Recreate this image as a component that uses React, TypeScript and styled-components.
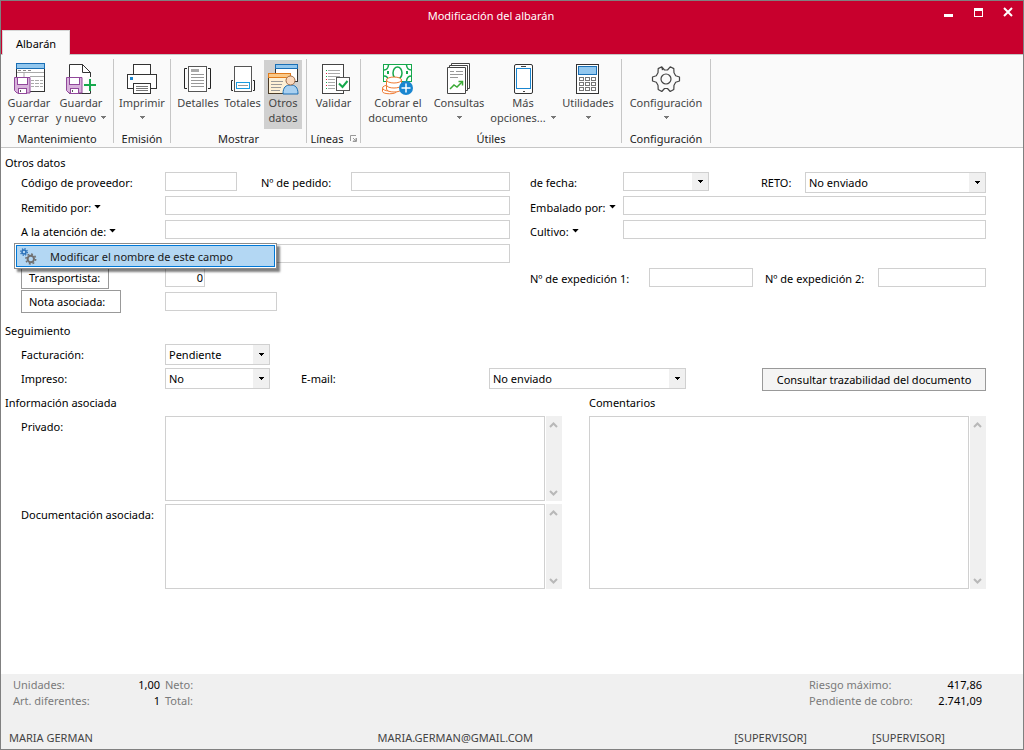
import React from 'react';
import styled, { createGlobalStyle } from 'styled-components';

const GlobalStyle = createGlobalStyle`
  *, *::before, *::after { box-sizing: border-box; }
  body { margin: 0; background: #fff; }
  body, button, input, select, textarea {
    font-family: 'Noto Sans', 'Open Sans', sans-serif;
    font-size: 11px;
    color: #000;
  }
`;

const Window = styled.div`
  display: flex;
  flex-direction: column;
  min-height: 100vh;
  border: 1px solid #808080;
  background: #fff;
`;

/* ---------- title bar ---------- */

const TitleBar = styled.header`
  display: flex;
  height: 29px;
  background: #c8002d;
`;

const Title = styled.h1`
  flex: 1;
  margin: 0;
  padding-left: 48px;
  font-size: 11px;
  font-weight: 400;
  line-height: 30px;
  text-align: center;
  color: #fff;
`;

const WindowButton = styled.button`
  display: flex;
  align-items: center;
  justify-content: center;
  width: 30px;
  height: 22px;
  padding: 0;
  border: 0;
  background: transparent;
`;

const TabStrip = styled.nav`
  display: flex;
  height: 25px;
  padding-left: 1px;
  background: #c8002d;
  border-bottom: 1px solid #c6c6c6;
`;

const Tab = styled.button`
  height: 25px;
  padding: 0 13px;
  border: 1px solid #d6d6d6;
  border-bottom: 0;
  background: #fafafa;
`;

/* ---------- ribbon ---------- */

const Ribbon = styled.div`
  display: flex;
  height: 93px;
  padding: 4px 0;
  background: #fafafa;
  border-bottom: 1px solid #c6c6c6;
`;

const Group = styled.section`
  display: flex;
  flex-direction: column;
  border-right: 1px solid #c6c6c6;
`;

const GroupTools = styled.div<{ $pad: string }>`
  display: flex;
  flex: none;
  height: 72px;
  padding: ${(p) => p.$pad};
`;

const GroupTitle = styled.div`
  display: flex;
  flex: none;
  align-items: center;
  justify-content: center;
  height: 12px;
  padding-top: 2px;
  color: #222;
`;

const Launcher = styled.button`
  display: flex;
  margin-left: 6px;
  padding: 0;
  border: 0;
  background: transparent;
`;

const Tool = styled.button<{ $width: number; $active?: boolean }>`
  display: flex;
  flex-direction: column;
  align-items: center;
  width: ${(p) => p.$width}px;
  height: 69px;
  margin-top: 1px;
  padding: 3px 0 0;
  border: 0;
  background: ${(p) => (p.$active ? '#d0d0d0' : 'transparent')};
  color: #444;
  line-height: 15px;
  white-space: nowrap;
`;

const ToolIcon = styled.svg`
  display: block;
  flex: none;
  width: 32px;
  height: 32px;
  overflow: visible;
`;

const ToolLine = styled.span`
  display: flex;
  align-items: center;
  justify-content: center;
  gap: 5px;
  height: 15px;
`;

/* ---------- form ---------- */

const Form = styled.form`
  flex: 1;
  padding: 2px 37px 20px 20px;
`;

const Heading = styled.h2<{ $first?: boolean }>`
  height: ${(p) => (p.$first ? 20 : 24)}px;
  margin: 0 0 0 -16px;
  padding-top: 2px;
  font-size: 11px;
  font-weight: 400;
  line-height: 22px;
`;

const Section = styled.section`
  margin-bottom: 4px;
`;

const Row = styled.div`
  display: grid;
  grid-template-columns: 144px minmax(0, 345fr) 113px minmax(0, 363fr);
  align-items: start;
  height: 24px;
`;

const TrackingRow = styled.div`
  display: flex;
  align-items: flex-start;
  height: 24px;
`;

const Cell = styled.div<{ $span?: number }>`
  position: relative;
  display: flex;
  align-items: flex-start;
  height: 24px;
  grid-column: span ${(p) => p.$span ?? 1};
`;

const Label = styled.label<{ $width?: number; $left?: number }>`
  flex: none;
  width: ${(p) => (p.$width ? `${p.$width}px` : 'auto')};
  padding: 2px 0 0 ${(p) => p.$left ?? 0}px;
  line-height: 22px;
  white-space: nowrap;
`;

const BlockLabel = styled(Label)`
  display: block;
  height: 24px;
`;

const MenuLabel = styled.button<{ $left?: number }>`
  display: flex;
  align-items: center;
  gap: 3px;
  height: 24px;
  padding: 2px 0 0 ${(p) => p.$left ?? 0}px;
  border: 0;
  background: transparent;
  white-space: nowrap;
`;

const Field = styled.input<{ $width?: number }>`
  flex: ${(p) => (p.$width ? 'none' : '1')};
  width: ${(p) => (p.$width ? `${p.$width}px` : 'auto')};
  min-width: 0;
  height: 19px;
  margin-top: 2px;
  padding: 0 1px 0 3px;
  border: 1px solid #d0d0d0;
  border-radius: 0;
  background: #fff;
`;

const NumberField = styled(Field)`
  text-align: right;
`;

const SelectBox = styled.div<{ $width?: number; $short?: boolean }>`
  position: relative;
  flex: ${(p) => (p.$width ? 'none' : '1')};
  width: ${(p) => (p.$width ? `${p.$width}px` : 'auto')};
  height: ${(p) => (p.$short ? 19 : 21)}px;
  margin-top: 2px;

  select {
    display: block;
    width: 100%;
    height: 100%;
    padding: 0 20px 0 3px;
    border: 1px solid #d0d0d0;
    border-radius: 0;
    background: #fff;
    appearance: none;
  }
`;

const SelectArrow = styled.span`
  position: absolute;
  top: 1px;
  right: 1px;
  bottom: 1px;
  display: flex;
  align-items: center;
  justify-content: center;
  width: 16px;
  background: #f0f0f0;
  pointer-events: none;
`;

const LinkButton = styled.button<{ $width: number }>`
  width: ${(p) => p.$width}px;
  height: 23px;
  padding: 0 0 0 7px;
  border: 1px solid #999;
  background: #fff;
  text-align: left;
  white-space: nowrap;
`;

const TraceButton = styled(LinkButton)`
  margin: 2px 0 0 auto;
  padding: 0;
  background: #f4f4f4;
  text-align: center;
`;

const Menu = styled.div`
  position: absolute;
  z-index: 2;
  top: 25px;
  left: -7px;
  width: 263px;
  padding: 1px;
  border: 1px solid #8c8c8c;
  background: #fff;
  box-shadow: 3px 3px 2px rgba(0, 0, 0, 0.5);
`;

const MenuItem = styled.button`
  display: flex;
  align-items: center;
  gap: 13px;
  width: 100%;
  height: 22px;
  padding: 0 3px;
  border: 1px solid #0078d7;
  background: #b3d7f3;
  color: #1a1a1a;
  white-space: nowrap;
`;

const Notes = styled.div`
  display: grid;
  grid-template-columns: minmax(0, 541fr) minmax(0, 397fr);
  column-gap: 27px;
`;

const NoteRow = styled.div`
  display: flex;
  height: 88px;
`;

const MemoBox = styled.div<{ $height: number }>`
  flex: 1;
  display: flex;
  gap: 1px;
  height: ${(p) => p.$height}px;
  margin-top: 2px;

  textarea {
    flex: 1;
    min-width: 0;
    padding: 3px;
    border: 1px solid #d0d0d0;
    border-radius: 0;
    resize: none;
  }
`;

const ScrollBar = styled.div`
  display: flex;
  flex-direction: column;
  justify-content: space-between;
  width: 16px;
  background: #f0f0f0;

  button {
    display: flex;
    align-items: center;
    justify-content: center;
    height: 17px;
    padding: 0 1px 0 0;
    border: 0;
    background: transparent;
  }
`;

/* ---------- footer ---------- */

const Footer = styled.footer`
  height: 75px;
  padding: 3px 41px 0 8px;
  background: #f0f0f0;
`;

const Totals = styled.div`
  display: flex;
  justify-content: space-between;
  height: 53px;
  padding-left: 4px;
`;

const Figures = styled.dl<{ $columns: string }>`
  display: grid;
  grid-template-columns: ${(p) => p.$columns};
  grid-auto-rows: 16px;
  align-content: start;
  column-gap: 5px;
  margin: 0;
  line-height: 16px;
  white-space: nowrap;

  dt { color: #7a7a7a; }
  dd { margin: 0; text-align: right; }
`;

const Status = styled.div`
  display: grid;
  grid-template-columns: 369fr 357fr 138fr 110fr;
  line-height: 16px;
  color: #444;
`;

/* ---------- drawings ---------- */

const Caret = () => (
  <svg width="7" height="4" viewBox="0 0 7 4" aria-hidden="true">
    <path d="M.3 0h6.400L3.500 3.600z" fill="#000" />
  </svg>
);

const SmallCaret = ({ color = '#000' }: { color?: string }) => (
  <svg width="5" height="3" viewBox="0 0 5 3" shapeRendering="crispEdges" aria-hidden="true">
    <path d="M0 0h5v1h-1v1h-1v1h-1v-1h-1v-1h-1z" fill={color} />
  </svg>
);

const Chevron = ({ down }: { down?: boolean }) => (
  <svg width="9" height="6" viewBox="0 0 9 6" aria-hidden="true">
    <path d={down ? 'M1 1l3.5 3.5L8 1' : 'M1 5l3.5-3.5L8 5'} fill="none" stroke="#b8b8b8" strokeWidth="2" />
  </svg>
);

const Floppy = () => (
  <g>
    <path d="M1.500 14.500h15.500v15.500h-13l-2.500-2.500z" fill="#d9b3dc" stroke="#91489b" />
    <rect x="4.500" y="14.500" width="10" height="7" fill="#fff" stroke="#91489b" />
    <rect x="5.500" y="25.500" width="8" height="5" fill="#fff" stroke="#91489b" />
    <rect x="7" y="27" width="1" height="2" fill="#555" />
  </g>
);

const SaveCloseIcon = () => (
  <ToolIcon viewBox="0 0 32 32">
    <rect x="3.500" y=".5" width="28" height="28" fill="#fff" stroke="#333" />
    <rect x="3.500" y=".5" width="28" height="5" fill="#92c7ee" stroke="#1a6fb5" />
    <path d="M5 7.500h3m2 0h3m2 0h3" stroke="#888" />
    <path d="M4 9.500h27m-20 0v5m6-1h14" stroke="#aaa" fill="none" />
    <path d="M18 17.500h3m1 0h4m1 0h3m-12 3h3m1 0h4m1 0h3m-12 3h3m1 0h4m1 0h3" stroke="#aaa" fill="none" />
    <Floppy />
  </ToolIcon>
);

const SaveNewIcon = () => (
  <ToolIcon viewBox="0 0 32 32">
    <path d="M4.500 1.500h13l8 8v21h-21z" fill="#fff" stroke="#333" />
    <path d="M17.500 1.500v8h8z" fill="#fff" stroke="#333" />
    <path d="M25 14v14m-7-6h14" stroke="#fafafa" strokeWidth="5" />
    <path d="M25 16v12m-6-6h12" stroke="#16a84c" strokeWidth="2" />
    <Floppy />
  </ToolIcon>
);

const PrintIcon = () => (
  <ToolIcon viewBox="0 0 32 32" fill="#fff" stroke="#333">
    <rect x="7.500" y="1.500" width="17" height="11" />
    <rect x="1.500" y="11.500" width="29" height="14" />
    <rect x="7.500" y="20.500" width="17" height="10" />
    <path d="M10 23.500h12m-12 2h12m-12 2h12" stroke="#777" />
    <rect x="4" y="14" width="3" height="3" fill="#1a86d0" stroke="none" />
  </ToolIcon>
);

const DetailsIcon = () => (
  <ToolIcon viewBox="0 0 32 32" fill="none" stroke="#555">
    <rect x="6.500" y="3.500" width="18" height="25" fill="#fff" />
    <rect x="9" y="6" width="8" height="3" fill="#aaa" stroke="none" />
    <path d="M9 11.500h13m-13 3h13m-13 3h13m-13 3h13m-13 3h13" stroke="#999" />
    <path d="M5 5.500h-2.500v20h2.500m21-20h2.500v20h-2.500" stroke="#222" />
  </ToolIcon>
);

const TotalsIcon = () => (
  <ToolIcon viewBox="0 0 32 32" fill="none" stroke="#555">
    <rect x="7.500" y="3.500" width="17" height="25" fill="#fff" />
    <rect x="9.500" y="19.500" width="13" height="6" stroke="#1a9be0" />
    <path d="M11 22.500h10" stroke="#999" />
    <path d="M6 17.500h-1.500v10h1.500m20-10h1.500v10h-1.500" stroke="#222" />
  </ToolIcon>
);

const OtherDataIcon = () => (
  <ToolIcon viewBox="0 0 32 32">
    <rect x="8.500" y="1.500" width="22" height="17" fill="#fff" stroke="#333" />
    <rect x="8.500" y="1.500" width="22" height="4" fill="#92c7ee" stroke="#1a6fb5" />
    <rect x="1.500" y="10.500" width="22" height="20" fill="#fdf0d6" stroke="#4a3b28" />
    <rect x="1.500" y="10.500" width="22" height="4" fill="#fac887" stroke="#e07c1c" />
    <path d="M4 18.500h12m-12 3h11m-11 3h10m-10 3h9" stroke="#999" />
    <path d="M16 31c0-7 3-9 7.500-9s7.500 2 7.500 9z" fill="#a9d0f0" stroke="#1a6fb5" />
    <circle cx="23.500" cy="17.500" r="4.500" fill="#fbd9bd" stroke="#9b6a48" />
  </ToolIcon>
);

const ValidateIcon = () => (
  <ToolIcon viewBox="0 0 32 32" fill="none">
    <rect x="4.500" y="1.500" width="21" height="29" fill="#fff" stroke="#444" />
    <path d="M10 7.500h12m-12 3h12m-12 3h12m-12 3h7m-7 3h7m-7 3h7m-7 3h7" stroke="#aaa" />
    <path d="M8 7.500h1m-1 6h1m-1 6h1m-1 6h1" stroke="#16a84c" />
    <path d="M8 10.500h1m-1 6h1m-1 6h1" stroke="#d8203c" />
    <rect x="18.500" y="14.500" width="13" height="13" fill="#fff" stroke="#555" />
    <path d="M21 20.500l3.500 3.500 5-6" stroke="#16a84c" strokeWidth="2" />
  </ToolIcon>
);

const CashIcon = () => (
  <ToolIcon viewBox="0 0 32 32" fill="none">
    <rect x="1.500" y="1.500" width="28" height="17" fill="#fff" stroke="#16a84c" />
    <path d="M2 7q4 0 4.500-5m18 0q.5 5 5 5m-27.500 6q4 0 4.500 5m18 0q.5-5 5-5" stroke="#16a84c" strokeWidth="1.500" />
    <path d="M6 8v3m19-3v3" stroke="#16a84c" strokeWidth="2" />
    <ellipse cx="15.500" cy="10" rx="4.500" ry="6" stroke="#16a84c" strokeWidth="1.500" />
    <g fill="#fff" stroke="#ee7a32">
      <path d="M.5 25.500v3c0 3 14 3 14 0v-3z" />
      <ellipse cx="7.500" cy="25" rx="7" ry="3" />
      <path d="M4.500 17v9c0 4 15 4 15 0v-9z" />
      <path d="M4.500 22c0 4 15 4 15 0" />
      <ellipse cx="12" cy="17" rx="7.500" ry="3" />
    </g>
    <circle cx="24" cy="25" r="7" fill="#1a86d0" />
    <path d="M24 20.500v9m-4.500-4.500h9" stroke="#fff" strokeWidth="1.500" />
  </ToolIcon>
);

const QueriesIcon = () => (
  <ToolIcon viewBox="0 0 32 32" fill="#fff" stroke="#444">
    <path d="M8.500.5h18v25h-18z" />
    <path d="M6.500 2.500h18v25h-18z" />
    <path d="M4.500 4.500h18v26h-18z" />
    <path d="M7 8.500h4m2 0h7m-13 3h13m-13 3h8" stroke="#999" />
    <path d="M7 26l4-4 3 2 5-5" stroke="#3aa935" fill="none" strokeWidth="1.500" />
    <path d="M15.500 18.500h4v4" stroke="#3aa935" fill="none" strokeWidth="1.500" />
  </ToolIcon>
);

const PhoneIcon = () => (
  <ToolIcon viewBox="0 0 32 32" fill="#fff">
    <rect x="7.500" y="1.500" width="18" height="29" rx="1.500" stroke="#333" />
    <rect x="9.500" y="5.500" width="14" height="20" stroke="#1a86d0" />
    <path d="M14 3.500h5m-3 25h2" stroke="#444" />
  </ToolIcon>
);

const CalculatorIcon = () => (
  <ToolIcon viewBox="0 0 32 32" fill="#fff">
    <rect x="4.500" y="1.500" width="22" height="29" stroke="#333" />
    <rect x="6.500" y="3.500" width="18" height="8" fill="#92c7ee" stroke="#1a6fb5" />
    {[14.5, 19.5, 24.5].map((y) =>
      [7.5, 13.5, 19.5].map((x) => <rect key={`${x}-${y}`} x={x} y={y} width="4" height="3" stroke="#777" />),
    )}
  </ToolIcon>
);

const GearIcon = () => (
  <ToolIcon viewBox="0 0 32 32" fill="none" stroke="#444" strokeWidth="1.200" strokeLinejoin="round">
    <path d="M12.500 7.200 11.800 3.800 8.200 5.600 8 9.800 6.300 12.800 2.500 14v4l3.800 1.200L8 22.200l.2 4.200 3.600 2.100 2.700-3h3l2.700 3 3.600-2.100.2-4.200 1.700-3 3.800-1.200v-4l-3.800-1.200-1.700-3-.2-4.200-3.600-1.800-2.700 3.200h-3l-2.700-3.200" />
    <circle cx="16" cy="16" r="5" />
  </ToolIcon>
);

const GearsIcon = () => (
  <svg width="17" height="17" viewBox="0 0 17 17" fill="none" aria-hidden="true">
    <circle cx="4" cy="4" r="2" stroke="#2a70b8" strokeWidth="1.500" />
    <circle cx="4" cy="4" r="3.300" stroke="#2a70b8" strokeWidth="1.300" strokeDasharray="1.300 1.300" />
    <circle cx="10.800" cy="11" r="3.200" stroke="#707070" strokeWidth="2" />
    <circle cx="10.800" cy="11" r="4.900" stroke="#707070" strokeWidth="1.500" strokeDasharray="1.900 1.900" />
  </svg>
);

/* ---------- parts ---------- */

type ToolProps = {
  icon: React.ReactNode;
  lines: string[];
  width: number;
  active?: boolean;
  menu?: 'inline' | 'below';
};

const ToolButton = ({ icon, lines, width, active, menu }: ToolProps) => (
  <Tool type="button" $width={width} $active={active}>
    {icon}
    {lines.map((line, i) => (
      <ToolLine key={line}>
        {line}
        {menu === 'inline' && i === lines.length - 1 && <SmallCaret color="#777" />}
      </ToolLine>
    ))}
    {menu === 'below' && (
      <ToolLine>
        <SmallCaret color="#777" />
      </ToolLine>
    )}
  </Tool>
);

type SelectProps = { id: string; options: string[]; width?: number; short?: boolean };

const Select = ({ id, options, width, short }: SelectProps) => (
  <SelectBox $width={width} $short={short}>
    <select id={id}>
      {options.map((o) => (
        <option key={o}>{o}</option>
      ))}
    </select>
    <SelectArrow>
      <SmallCaret />
    </SelectArrow>
  </SelectBox>
);

const Memo = ({ id, height }: { id: string; height: number }) => (
  <MemoBox $height={height}>
    <textarea id={id} />
    <ScrollBar>
      <button type="button" aria-label="Subir">
        <Chevron />
      </button>
      <button type="button" aria-label="Bajar">
        <Chevron down />
      </button>
    </ScrollBar>
  </MemoBox>
);

export default function App() {
  return (
    <Window>
      <GlobalStyle />
      <TitleBar>
        <Title>Modificación del albarán</Title>
        <WindowButton aria-label="Minimizar">
          <svg width="9" height="9" viewBox="0 0 9 9">
            <path d="M0 6h9v3H0z" fill="#fff" />
          </svg>
        </WindowButton>
        <WindowButton aria-label="Maximizar">
          <svg width="9" height="9" viewBox="0 0 9 9">
            <path d="M0 0h9v9H0zM1 3v5h7V3z" fill="#fff" fillRule="evenodd" />
          </svg>
        </WindowButton>
        <WindowButton aria-label="Cerrar">
          <svg width="10" height="10" viewBox="0 0 10 10">
            <path d="M1 1l8 8M9 1l-8 8" stroke="#fff" strokeWidth="2" />
          </svg>
        </WindowButton>
      </TitleBar>
      <TabStrip>
        <Tab type="button">Albarán</Tab>
      </TabStrip>

      <Ribbon>
        <Group>
          <GroupTools $pad="0 6px 0 2px">
            <ToolButton icon={<SaveCloseIcon />} lines={['Guardar', 'y cerrar']} width={52} />
            <ToolButton icon={<SaveNewIcon />} lines={['Guardar', 'y nuevo']} width={52} menu="inline" />
          </GroupTools>
          <GroupTitle>Mantenimiento</GroupTitle>
        </Group>
        <Group>
          <GroupTools $pad="0">
            <ToolButton icon={<PrintIcon />} lines={['Imprimir']} width={56} menu="below" />
          </GroupTools>
          <GroupTitle>Emisión</GroupTitle>
        </Group>
        <Group>
          <GroupTools $pad="0 4px">
            <ToolButton icon={<DetailsIcon />} lines={['Detalles']} width={46} />
            <ToolButton icon={<TotalsIcon />} lines={['Totales']} width={43} />
            <ToolButton icon={<OtherDataIcon />} lines={['Otros', 'datos']} width={38} active />
          </GroupTools>
          <GroupTitle>Mostrar</GroupTitle>
        </Group>
        <Group>
          <GroupTools $pad="0">
            <ToolButton icon={<ValidateIcon />} lines={['Validar']} width={53} />
          </GroupTools>
          <GroupTitle>
            Líneas
            <Launcher type="button" aria-label="Opciones de líneas">
              <svg width="7" height="7" viewBox="0 0 7 7" fill="none" stroke="#999">
                <path d="M.5 6V.5H6M6.500 3v3.500H3zM3 3l3 3" />
              </svg>
            </Launcher>
          </GroupTitle>
        </Group>
        <Group>
          <GroupTools $pad="0 4px">
            <ToolButton icon={<CashIcon />} lines={['Cobrar el', 'documento']} width={66} />
            <ToolButton icon={<QueriesIcon />} lines={['Consultas']} width={56} menu="below" />
            <ToolButton icon={<PhoneIcon />} lines={['Más', 'opciones...']} width={72} menu="inline" />
            <ToolButton icon={<CalculatorIcon />} lines={['Utilidades']} width={58} menu="below" />
          </GroupTools>
          <GroupTitle>Útiles</GroupTitle>
        </Group>
        <Group>
          <GroupTools $pad="0">
            <ToolButton icon={<GearIcon />} lines={['Configuración']} width={88} menu="below" />
          </GroupTools>
          <GroupTitle>Configuración</GroupTitle>
        </Group>
      </Ribbon>

      <Form onSubmit={(e) => e.preventDefault()}>
        <Section>
          <Heading $first>Otros datos</Heading>
          <Row>
            <Label htmlFor="codigo">Código de proveedor:</Label>
            <Cell>
              <Field id="codigo" $width={72} />
              <Label htmlFor="pedido" $width={114} $left={24}>Nº de pedido:</Label>
              <Field id="pedido" />
            </Cell>
            <Label htmlFor="fecha" $left={20}>de fecha:</Label>
            <Cell>
              <Select id="fecha" options={['']} width={86} short />
              <Label htmlFor="reto" $width={96} $left={52}>RETO:</Label>
              <Select id="reto" options={['No enviado']} />
            </Cell>
          </Row>
          <Row>
            <MenuLabel type="button">Remitido por: <Caret /></MenuLabel>
            <Cell><Field aria-label="Remitido por" /></Cell>
            <MenuLabel type="button" $left={20}>Embalado por: <Caret /></MenuLabel>
            <Cell><Field aria-label="Embalado por" /></Cell>
          </Row>
          <Row>
            <Cell>
              <MenuLabel type="button" aria-haspopup="menu" aria-expanded="true">A la atención de: <Caret /></MenuLabel>
              <Menu role="menu">
                <MenuItem type="button" role="menuitem">
                  <GearsIcon />
                  Modificar el nombre de este campo
                </MenuItem>
              </Menu>
            </Cell>
            <Cell><Field aria-label="A la atención de" /></Cell>
            <MenuLabel type="button" $left={20}>Cultivo: <Caret /></MenuLabel>
            <Cell><Field aria-label="Cultivo" /></Cell>
          </Row>
          <Row>
            <Cell />
            <Cell><Field aria-label="Campo adicional" /></Cell>
          </Row>
          <Row>
            <LinkButton type="button" $width={88}>Transportista:</LinkButton>
            <Cell><NumberField aria-label="Transportista" defaultValue="0" $width={40} /></Cell>
            <Cell $span={2}>
              <Label htmlFor="exp1" $width={139} $left={20}>Nº de expedición 1:</Label>
              <Field id="exp1" $width={104} />
              <Label htmlFor="exp2" $width={125} $left={12}>Nº de expedición 2:</Label>
              <Field id="exp2" />
            </Cell>
          </Row>
          <Row>
            <LinkButton type="button" $width={100}>Nota asociada:</LinkButton>
            <Cell><Field aria-label="Nota asociada" $width={112} /></Cell>
          </Row>
        </Section>

        <section>
          <Heading>Seguimiento</Heading>
          <TrackingRow>
            <Label htmlFor="facturacion" $width={144}>Facturación:</Label>
            <Select id="facturacion" options={['Pendiente']} width={105} />
          </TrackingRow>
          <TrackingRow>
            <Label htmlFor="impreso" $width={144}>Impreso:</Label>
            <Select id="impreso" options={['No']} width={105} />
            <Label htmlFor="email" $width={219} $left={31}>E-mail:</Label>
            <Select id="email" options={['No enviado']} width={197} />
            <TraceButton type="button" $width={224}>Consultar trazabilidad del documento</TraceButton>
          </TrackingRow>
        </section>

        <Notes>
          <section>
            <Heading>Información asociada</Heading>
            <NoteRow>
              <Label htmlFor="privado" $width={144}>Privado:</Label>
              <Memo id="privado" height={85} />
            </NoteRow>
            <NoteRow>
              <Label htmlFor="documentacion" $width={144}>Documentación asociada:</Label>
              <Memo id="documentacion" height={85} />
            </NoteRow>
          </section>
          <section>
            <BlockLabel htmlFor="comentarios">Comentarios</BlockLabel>
            <Memo id="comentarios" height={173} />
          </section>
        </Notes>
      </Form>

      <Footer>
        <Totals>
          <Figures $columns="90px 52px 33px">
            <dt>Unidades:</dt>
            <dd>1,00</dd>
            <dt>Neto:</dt>
            <dt>Art. diferentes:</dt>
            <dd>1</dd>
            <dt>Total:</dt>
          </Figures>
          <Figures $columns="115px 53px">
            <dt>Riesgo máximo:</dt>
            <dd>417,86</dd>
            <dt>Pendiente de cobro:</dt>
            <dd>2.741,09</dd>
          </Figures>
        </Totals>
        <Status>
          <span>MARIA GERMAN</span>
          <span>MARIA.GERMAN@GMAIL.COM</span>
          <span>[SUPERVISOR]</span>
          <span>[SUPERVISOR]</span>
        </Status>
      </Footer>
    </Window>
  );
}
